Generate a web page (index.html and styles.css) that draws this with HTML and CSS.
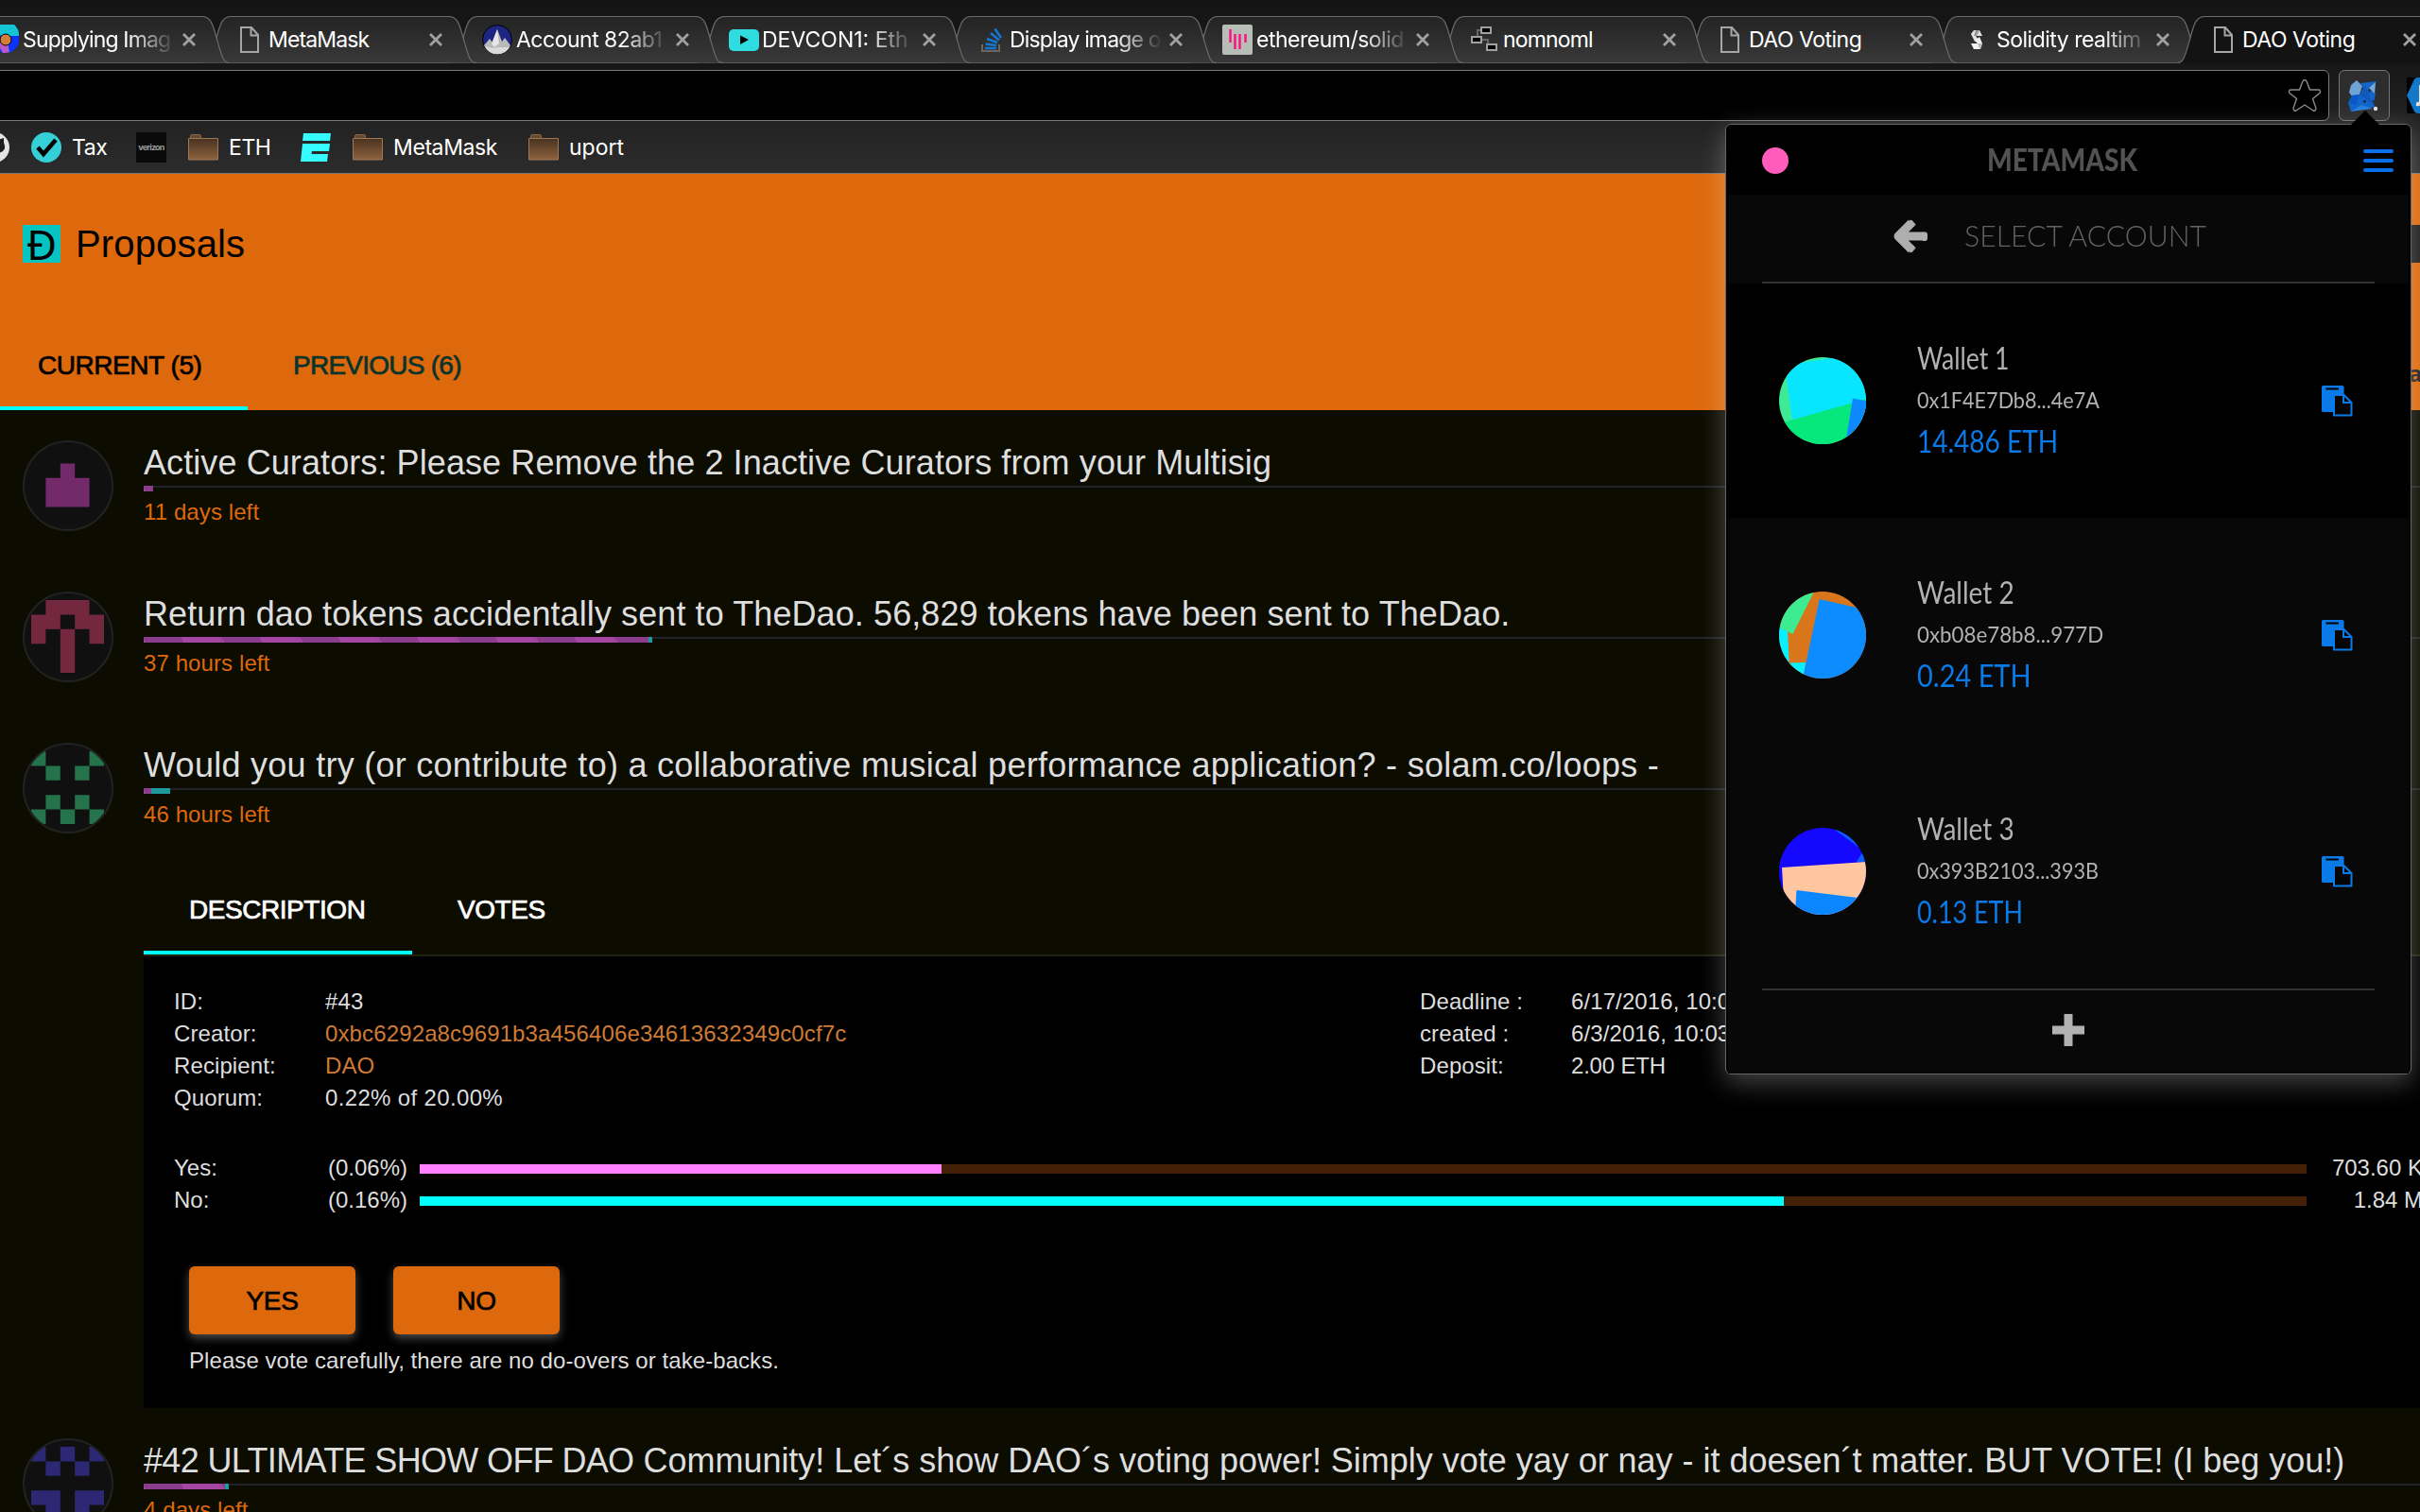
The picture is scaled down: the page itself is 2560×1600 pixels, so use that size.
FILE: index.html
```html
<!DOCTYPE html>
<html lang="en">
<head>
<meta charset="utf-8">
<title>DAO Voting</title>
<link rel="stylesheet" href="styles.css">
</head>
<body>
<svg class="defs" width="0" height="0" aria-hidden="true">
  <defs>
    <linearGradient id="tabFill" x1="0" y1="0" x2="0" y2="1"><stop offset="0" stop-color="#232323"/><stop offset="1" stop-color="#393939"/></linearGradient>
    <linearGradient id="folderFill" x1="0" y1="0" x2="0" y2="1"><stop offset="0" stop-color="#4a321f"/><stop offset="1" stop-color="#8c623f"/></linearGradient>
    <symbol id="tabShape" viewBox="-16 0 293 50"><path d="M-14 49.5C-7 49.5 -6 44 0 23C4 8 6 .5 16 .5H245C255 .5 257 8 261 23C267 44 268 49.5 275 49.5" fill="url(#tabFill)" stroke="#6b6b6b" stroke-width="1.2"/></symbol>
    <symbol id="doc" viewBox="0 0 20 28"><path d="M1 1H12L19 9V27H1ZM11.500 1V9.500H19" fill="none" stroke="#a6a6a6" stroke-width="2"/></symbol>
    <symbol id="close" viewBox="0 0 16 16"><path d="M2 2L14 14M14 2L2 14" stroke="#a2a2a2" stroke-width="2.800"/></symbol>
    <symbol id="folder" viewBox="0 0 32 28"><path d="M2.500 5V2Q2.500 .5 4 .5H12Q13.500 .5 13.500 2V5" fill="#65482e" stroke="#8a6848"/><path d="M.5 4.500H31.500V27H.5Z" fill="url(#folderFill)" stroke="#9c7858"/></symbol>
    <symbol id="copy" viewBox="0 0 33 33"><path d="M1.500 0H22Q23.500 0 23.500 1.500V10H15Q12 10 12 13V28H1.500Q0 28 0 26.500V1.500Q0 0 1.500 0Z" fill="#0a7ae8"/><path d="M4.500 2.500H18V4.500H4.500Z" fill="#000"/><path d="M13 11V31.500H31.500V18L23.500 10H13" fill="#050505" stroke="#0a7ae8" stroke-width="2" stroke-linejoin="round"/><path d="M23 10V18H31.500" fill="none" stroke="#0a7ae8" stroke-width="2"/></symbol>
  </defs>
</svg>

<header class="chrome">
  <div class="tabstrip">
    <div class="tab"><svg class="tab-bg"><use href="#tabShape"/></svg>
      <svg class="fav" viewBox="0 0 32 32"><circle cx="18" cy="16" r="14" fill="#0a33ff"/><path d="M4 10A14 14 0 0 1 32 12H16Z" fill="#15c5d6"/><path d="M4 12L15 30A14 14 0 0 0 22 29L20 18Z" fill="#b55ac8"/><circle cx="18" cy="16" r="6" fill="#d08038" stroke="#000"/></svg>
      <span class="label fade tight">Supplying Imag</span><svg class="x"><use href="#close"/></svg></div>
    <div class="tab"><svg class="tab-bg"><use href="#tabShape"/></svg>
      <svg class="fav doc"><use href="#doc"/></svg><span class="label tight">MetaMask</span><svg class="x"><use href="#close"/></svg></div>
    <div class="tab"><svg class="tab-bg"><use href="#tabShape"/></svg>
      <svg class="fav" viewBox="0 0 32 32"><circle cx="16" cy="16" r="15.500" fill="#1c2580" stroke="#000"/><path d="M2 22L8 15L11 19L16 5L21 18L24 14L30 22A15 15 0 0 1 2 22Z" fill="#b9b9b9"/><path d="M16 5L18 20L13 24L10 20Z" fill="#e6e6e6"/><path d="M3 23L12 25L18 24L29 24A15 15 0 0 1 3 23Z" fill="#d9dcd9"/></svg>
      <span class="label fade">Account 82ab1</span><svg class="x"><use href="#close"/></svg></div>
    <div class="tab"><svg class="tab-bg"><use href="#tabShape"/></svg>
      <svg class="fav" viewBox="0 0 32 32"><rect x="0" y="5" width="32" height="23" rx="5" fill="#2fdce0"/><path d="M12 11.500L21 16L12 21Z" fill="#000"/></svg>
      <span class="label fade wide">DEVCON1: Eth</span><svg class="x"><use href="#close"/></svg></div>
    <div class="tab"><svg class="tab-bg"><use href="#tabShape"/></svg>
      <svg class="fav" viewBox="0 0 32 32"><path d="M7 21V28H25V21" fill="none" stroke="#6e655d" stroke-width="2"/><path d="M10 25H22M10.500 20.500L22 22M12 15L23 19M16 9L25 16.500M20.500 4.500L27 14" stroke="#1577d2" stroke-width="2.600"/></svg>
      <span class="label fade tight">Display image o</span><svg class="x"><use href="#close"/></svg></div>
    <div class="tab"><svg class="tab-bg"><use href="#tabShape"/></svg>
      <svg class="fav" viewBox="0 0 32 32"><rect width="32" height="32" rx="2" fill="#b7beb5"/><path d="M8.500 5V19M13.500 10V26M18.500 10V26M24.500 10V19" stroke="#ff0f82" stroke-width="2.400"/></svg>
      <span class="label fade">ethereum/solid</span><svg class="x"><use href="#close"/></svg></div>
    <div class="tab"><svg class="tab-bg"><use href="#tabShape"/></svg>
      <svg class="fav" viewBox="0 0 32 32"><path d="M14 6H9V13M12 16H20V22" fill="none" stroke="#666" stroke-width="2"/><path d="M13 3H23V9H13ZM3 13H13V19H3ZM19 21H29V27H19Z" fill="#000" stroke="#a0a0a0" stroke-width="2"/></svg>
      <span class="label tight">nomnoml</span><svg class="x"><use href="#close"/></svg></div>
    <div class="tab"><svg class="tab-bg"><use href="#tabShape"/></svg>
      <svg class="fav doc"><use href="#doc"/></svg><span class="label">DAO Voting</span><svg class="x"><use href="#close"/></svg></div>
    <div class="tab"><svg class="tab-bg"><use href="#tabShape"/></svg>
      <svg class="fav" viewBox="0 0 32 32"><path d="M9 10L12 6H18L21 12H14L17 16L13 18Z" fill="#e2e2e2"/><path d="M14 6L18 6L15 12H12Z" fill="#999"/><path d="M21 20L19 26H12L9 20H16L13 17L18 13Z" fill="#f2f2f2"/><path d="M16 20H21L18 26Z" fill="#bbb"/></svg>
      <span class="label fade">Solidity realtim</span><svg class="x"><use href="#close"/></svg></div>
    <div class="tab active"><svg class="tab-bg" viewBox="-16 0 293 50"><path d="M-14 50C-7 50 -6 44 0 23C4 8 6 .5 16 .5H300V50Z" fill="#131313"/><path d="M-14 49.500C-7 49.500 -6 44 0 23C4 8 6 .5 16 .5H300" fill="none" stroke="#6b6b6b" stroke-width="1.2"/></svg>
      <svg class="fav doc"><use href="#doc"/></svg><span class="label">DAO Voting</span><svg class="x"><use href="#close"/></svg></div>
  </div>
  <div class="toolbar">
    <div class="omnibox"><svg width="36" height="36" viewBox="0 0 36 36"><path d="M18 1.500Q19.500 1.500 20.500 4L23.500 12H33Q35.500 13 34 15.500L26.500 21.500L30 31.500Q29.500 35 27 34L18 28L9 34Q6.500 35 6 31.500L9.500 21.500L2 15.500Q.5 13 3 12H12.500L15.500 4Q16.500 1.500 18 1.500Z" fill="none" stroke="#8a8a8a" stroke-width="1.400"/></svg></div>
    <div class="ext"><svg width="34" height="36" viewBox="0 0 34 36"><path d="M3 15L5 7L11 2L17 8L14 17L7 20Z" fill="#6fa3d6"/><path d="M15 5L32 3L23 12L27 20L30 30L20 32L5 35L2 26L6 18L14 17L18 10Z" fill="#1265c9"/><path d="M6 18L14 17L10 28L2 26Z" fill="#0c57c4"/><path d="M32 3L24 10L31 16L29 26L23 18Z" fill="#1265c9"/><path d="M31 4L30 16L24 10Z" fill="#79a9d8"/><path d="M20 8L29 29L14 17Z" fill="#0f5abc"/><path d="M17 24L21 23L20 26ZM27 24L29 23L29 26Z" fill="#123"/><circle cx="31" cy="32" r="2.200" fill="#ddd"/><path d="M5 35L16 28L28 32Z" fill="#2b7fdc"/></svg></div>
    <svg class="hex" width="38" height="38" viewBox="0 0 38 38"><path d="M0 0H38V38H0Z" fill="#000"/><path d="M0 19L8 2Q9 0 12 0H38V38H12Q9 38 8 36Z" fill="#1478c8"/><path d="M15 8V24Q15 29 10 28" fill="none" stroke="#e8e0d8" stroke-width="4"/></svg>
  </div>
  <div class="bookmarks">
    <svg class="gh" width="32" height="32" viewBox="0 0 32 32"><circle cx="16" cy="16" r="16" fill="#e4e4e4"/><path d="M10 28V22Q2 20 6 11L6 6L12 8H20L26 6V11Q30 20 20 22V30Z" fill="#1d1d1d"/></svg>
    <svg class="tax" width="32" height="32" viewBox="0 0 32 32"><circle cx="16" cy="16" r="16" fill="#35cfd8"/><path d="M7 16L13 23L26 8" fill="none" stroke="#000" stroke-width="4.500"/></svg><span class="t1">Tax</span>
    <div class="vz"><span>verizon</span></div>
    <svg class="folder"><use href="#folder"/></svg><span class="t2">ETH</span>
    <svg class="ee" width="32" height="30" viewBox="0 0 32 30"><path d="M3 0H32L31 8H2ZM2 11H31L30 19H12L11.500 22H29L28 30H0Z" fill="#35fbff"/></svg>
    <svg class="folder"><use href="#folder"/></svg><span class="t3">MetaMask</span>
    <svg class="folder"><use href="#folder"/></svg><span class="t4">uport</span>
  </div>
</header>

<div class="page">
  <header class="head">
    <div class="brand"><div class="logo">Đ</div><h1>Proposals</h1><div class="menu-btn"></div></div>
    <nav class="nav"><a class="on">CURRENT (5)</a><a class="prev">PREVIOUS (6)</a><span class="acct">a</span></nav>
  </header>

  <ul class="list">
    <li class="item">
      <div class="avatar"><svg viewBox="0 0 5 5"><path fill="#732a6b" d="M2 1h1v1h1v2h-3v-2h1z"/></svg></div>
      <div class="body"><h2>Active Curators: Please Remove the 2 Inactive Curators from your Multisig</h2>
        <div class="track"><i class="yes" style="width:10px"></i></div><p class="left">11 days left</p></div>
    </li>
    <li class="item">
      <div class="avatar"><svg viewBox="0 0 5 5"><path fill="#732840" d="M1 0h3v1h1v2h-1v-1h-1v-1h-1v1h-1v1h-1v-2h1zM2 2h1v3h-1z"/></svg></div>
      <div class="body"><h2>Return dao tokens accidentally sent to TheDao. 56,829 tokens have been sent to TheDao.</h2>
        <div class="track"><i class="yes" style="width:534px"></i><i class="no" style="width:4px"></i></div><p class="left">37 hours left</p></div>
    </li>
    <li class="item open">
      <div class="avatar"><svg viewBox="0 0 5 5"><path fill="#24734a" d="M0 0h1v1h-1zM4 0h1v1h-1zM1 1h1v1h-1zM3 1h1v1h-1zM1 3h1v1h-1zM3 3h1v1h-1zM0 4h1v1h-1zM2 4h1v1h-1zM4 4h1v1h-1z"/></svg></div>
      <div class="body"><h2 class="loose">Would you try (or contribute to) a collaborative musical performance application? - solam.co/loops -</h2>
        <div class="track"><i class="yes" style="width:8px"></i><i class="no" style="width:20px"></i></div><p class="left">46 hours left</p>
        <nav class="subnav"><a class="on">DESCRIPTION</a><a>VOTES</a></nav>
        <section class="panel">
          <div class="facts">
            <dl><dt>ID:</dt><dd>#43</dd><dt>Creator:</dt><dd class="link">0xbc6292a8c9691b3a456406e34613632349c0cf7c</dd><dt>Recipient:</dt><dd class="link">DAO</dd><dt>Quorum:</dt><dd class="quorum">0.22% of 20.00%</dd></dl>
            <dl><dt>Deadline :</dt><dd>6/17/2016, 10:03</dd><dt>created :</dt><dd>6/3/2016, 10:03</dd><dt>Deposit:</dt><dd class="deposit">2.00 ETH</dd></dl>
          </div>
          <div class="votes">
            <div class="vote"><span>Yes:</span><span class="pct">(0.06%)</span><div class="bar"><i class="pink" style="width:552px"></i></div><span class="amt">703.60 K</span></div>
            <div class="vote"><span>No:</span><span class="pct">(0.16%)</span><div class="bar"><i class="cyan" style="width:1443px"></i></div><span class="amt">1.84 M</span></div>
          </div>
          <div class="buttons"><button>YES</button><button>NO</button></div>
          <p class="note">Please vote carefully, there are no do-overs or take-backs.</p>
        </section>
      </div>
    </li>
    <li class="item">
      <div class="avatar"><svg viewBox="0 0 5 5"><path fill="#2c2873" d="M0 0h1v1h-1zM2 0h1v1h-1zM4 0h1v1h-1zM1 1h1v1h-1zM3 1h1v1h-1zM0 3h2v2h-1v-1h-1zM3 3h2v1h-1v1h-1z"/></svg></div>
      <div class="body"><h2 class="tighter"><span class="caps">#42 ULTIMATE SHOW OFF DAO</span> Community! Let´s show DAO´s voting power! Simply vote yay or nay - it doesen´t matter. BUT VOTE! (I beg you!)</h2>
        <div class="track"><i class="yes" style="width:86px"></i><i class="no" style="width:4px"></i></div><p class="left">4 days left</p></div>
    </li>
  </ul>
</div>

<aside class="popup">
  <svg class="arrow" width="32" height="16" viewBox="0 0 32 16"><path d="M0 16L16 0L32 16Z" fill="#000"/></svg>
  <div class="bar-top"><i class="net"></i><span class="name"><b>METAMASK</b></span><div class="burger"><i></i><i></i><i></i></div></div>
  <div class="select"><svg width="36" height="38" viewBox="0 0 36 38"><path d="M19 5L5 19L19 33M6 19H32" fill="none" stroke="#aeaeae" stroke-width="9" stroke-linejoin="round" stroke-linecap="butt"/><path d="M16 3.500L19 2L23 6.500L21 9ZM16 34.500L19 36L23 31.500L21 29ZM31 15H34Q35.500 15 35.500 17V21Q35.500 23.500 34 23.500H31Z" fill="#aeaeae" stroke="#aeaeae" stroke-width="1"/></svg><span class="sel"><b>SELECT ACCOUNT</b></span></div>
  <div class="wallets">
    <div class="wallet first"><svg class="jazz" viewBox="0 0 92 92"><path fill="#3deb97" d="M0 0H92V92H0Z"/><path fill="#08e6ff" d="M6 8.500L54 1L100 -6V60L14 67Z"/><path fill="#06e87c" d="M8 68L77 48.500L100 42V92H0V70Z"/><path fill="#0d88ff" d="M78 43.500L100 48V92H70Z"/></svg>
      <div class="info"><span class="wn"><b>Wallet 1</b></span><span class="wa"><b>0x1F4E7Db8...4e7A</b></span><span class="we"><b>14.486 ETH</b></span></div><svg class="copy"><use href="#copy"/></svg></div>
    <div class="wallet second"><svg class="jazz" viewBox="0 0 92 92"><path fill="#d9761c" d="M0 0H92V92H0Z"/><path fill="#3deb90" d="M37 0H0V38L14.500 45Z"/><path fill="#06f0ff" d="M0 38L9 42L10.700 75.500L28 75L26 92H0Z"/><path fill="#0d8cff" d="M42.700 8L100 21V92H25Z"/></svg>
      <div class="info"><span class="wn"><b>Wallet 2</b></span><span class="wa"><b>0xb08e78b8...977D</b></span><span class="we"><b>0.24 ETH</b></span></div><svg class="copy"><use href="#copy"/></svg></div>
    <div class="wallet third"><svg class="jazz" viewBox="0 0 92 92"><path fill="#1408ff" d="M0 0H92V92H0Z"/><path fill="#0d5cff" d="M56 0L85 21L88 26L82 36L92 37V0Z"/><path fill="#ffc69f" d="M3 42L92 36V92H5L4.400 66Z"/><path fill="#0a86ff" d="M18.400 66L83 74L92 76V92H17Z"/></svg>
      <div class="info"><span class="wn"><b>Wallet 3</b></span><span class="wa"><b>0x393B2103...393B</b></span><span class="we"><b>0.13 ETH</b></span></div><svg class="copy"><use href="#copy"/></svg></div>
  </div>
  <div class="add"><svg width="34" height="34" viewBox="0 0 34 34"><path d="M17 4.500V29.500M4.500 17H29.500" stroke="#b2b2b2" stroke-width="9" stroke-linecap="square"/></svg></div>
</aside>
</body>
</html>
```
FILE: styles.css
```css
* { box-sizing: border-box; }
body { margin: 0; width: 2560px; height: 1600px; overflow: hidden; position: relative; background: #0c0c00; color: #dedede; font-family: "Liberation Sans", Arial, sans-serif; font-size: 24px; }
b { font-weight: inherit; }
svg { display: block; flex: none; }
.defs { position: absolute; }
h1, h2, p, ul, dl, dd { margin: 0; padding: 0; font-weight: 400; }

.chrome { height: 184px; background: linear-gradient(#141414, #191919 66px, #171717 67px, #222 128px, #2c2c2c 183px); border-bottom: 1px solid #777; font-family: Inter, sans-serif; color: #fff; overflow: hidden; }
.tabstrip { height: 67px; padding-top: 17px; margin-left: -32px; width: 2700px; display: flex; background: linear-gradient(#777, #777) 0 66px / 100% 1px no-repeat; }
.tab { position: relative; flex: none; width: 261px; height: 50px; padding: 0 21px 0 20px; display: flex; align-items: center; }
.tab:nth-child(1) { z-index: 9; }
.tab:nth-child(2) { z-index: 8; }
.tab:nth-child(3) { z-index: 7; }
.tab:nth-child(4) { z-index: 6; }
.tab:nth-child(5) { z-index: 5; }
.tab:nth-child(6) { z-index: 4; }
.tab:nth-child(7) { z-index: 3; }
.tab:nth-child(8) { z-index: 2; }
.tab:nth-child(9) { z-index: 1; }
.tab.active { z-index: 10; }
.tab-bg { position: absolute; left: -16px; top: 0; width: 293px; height: 50px; z-index: -1; }
.fav { width: 32px; height: 32px; }
.fav.doc { width: 20px; height: 28px; margin: 0 6px 0 5px; }
.fav.doc + .label { width: 161px; }
.label { width: 160px; margin-left: 4px; height: 50px; line-height: 51px; font-size: 23px; letter-spacing: -.5px; white-space: nowrap; overflow: hidden; }
.label.tight { letter-spacing: -.85px; }
.label.wide { letter-spacing: 0; margin-left: 3px; width: 161px; }
.fade { -webkit-mask-image: linear-gradient(90deg, #000 112px, transparent 162px); mask-image: linear-gradient(90deg, #000 112px, transparent 162px); }
.x { width: 16px; height: 16px; margin-left: 8px; }

.toolbar { height: 61px; padding-top: 7px; display: flex; align-items: flex-start; }
.omnibox { flex: none; width: 2474px; margin-left: -10px; height: 54px; background: #000; border: 1.500px solid #777; border-radius: 6px; display: flex; justify-content: flex-end; padding: 8px 7px 0 0; }
.ext { flex: none; width: 54px; height: 54px; margin-left: 10px; border: 1px solid #757575; border-radius: 6px; background: #2d2d2d; display: flex; justify-content: center; padding: 8px 4px 0 0; }
.hex { margin: 8px 0 0 18px; }
.bookmarks { height: 55px; display: flex; align-items: center; font-size: 23px; letter-spacing: -.4px; }
.gh { margin-left: -22px; }
.tax { margin-left: 23px; }
.bookmarks span { line-height: 40px; white-space: nowrap; }
.t1 { margin-left: 11px; width: 68px; }
.bookmarks .vz { width: 32px; height: 32px; background: #0a0a0a; display: flex; justify-content: center; align-items: center; overflow: hidden; margin-right: 23px; }
.bookmarks .vz span { font-size: 9px; font-weight: 700; color: #999; letter-spacing: -.8px; }
.folder { width: 32px; height: 28px; }
.t2 { margin-left: 11px; width: 76px; }
.ee { margin-right: 23px; }
.t3 { margin-left: 11px; width: 143px; }
.t4 { margin-left: 11px; letter-spacing: 0; }

.page { height: 1416px; overflow: hidden; }
.head { height: 250px; background: #dd690c; padding-top: 54px; display: flex; flex-direction: column; justify-content: space-between; color: #000; overflow: hidden; }
.brand { display: flex; height: 40px; padding-left: 24px; }
.logo { width: 40px; height: 40px; background: #06c4c2; text-align: center; font-family: "Noto Sans", sans-serif; font-size: 44px; line-height: 40px; }
h1 { margin-left: 16px; font-size: 40px; line-height: 41px; letter-spacing: .15px; }
.menu-btn { margin-left: auto; width: 16px; height: 40px; background: #1f1f1f; border-radius: 5px 0 0 5px; }
.nav, .subnav { display: flex; height: 96px; font-size: 28px; line-height: 97px; -webkit-text-stroke: .7px; letter-spacing: -.45px; }
.nav a { padding-left: 48px; color: #0a332c; }
.nav a.on { width: 262px; padding-left: 40px; color: #000; border-bottom: 4px solid #0ff; }
.nav a.prev { letter-spacing: -.75px; }
.acct { margin-left: auto; width: 12px; font: 700 24px/114px "Noto Sans", sans-serif; color: #222; -webkit-text-stroke: 0; }

.list { list-style: none; }
.item { display: flex; height: 160px; padding: 32px 0 0 24px; }
.item.open { height: 736px; }
.avatar { flex: none; width: 96px; height: 96px; border-radius: 50%; overflow: hidden; background: #101010; border: 2px solid #222; padding: 7px; margin-right: 32px; }
.avatar svg { width: 77px; height: 77px; }
.body { width: 2636px; flex: none; }
h2 { height: 48px; font-size: 36px; line-height: 48px; white-space: nowrap; letter-spacing: .09px; }
h2.loose { letter-spacing: .27px; }
h2.tighter { letter-spacing: -.02px; }
.caps { letter-spacing: -.65px; }
.track { height: 6px; display: flex; background: linear-gradient(#222226, #222226) 0 0 / 100% 2px no-repeat; }
.track .yes { background: repeating-linear-gradient(60deg, #a446a2 0 2px, #8c3c8c 2px 37px, #a446a2 37px 71.500px, #8c3c8c 71.500px 72px); }
.track .no { background: #1f9a9c; }
.left { height: 44px; line-height: 44px; color: #dd690c; letter-spacing: .1px; }

.subnav { margin-top: 30px; height: 98px; border-bottom: 2px solid #222210; color: #fff; }
.subnav a { height: 96px; padding: 0 48px; }
.subnav a.on { width: 284px; border-bottom: 4px solid #0ff; }
.panel { height: 478px; padding: 31px 0 0 32px; background: #000; }
.facts { display: flex; }
dl { flex: none; width: 1318px; display: grid; grid-template-columns: 160px 1fr; grid-auto-rows: 34px; line-height: 34px; align-content: start; letter-spacing: .1px; }
.link { color: #cf7b34; letter-spacing: .13px; }
.quorum { letter-spacing: .35px; }
.deposit { letter-spacing: -.2px; }
.votes { margin-top: 40px; }
.vote { display: grid; grid-template-columns: 163px 97px 1996px 123px; height: 34px; line-height: 34px; }
.bar { height: 10px; margin-top: 13px; background: #442006; }
.bar i { display: block; height: 10px; }
.pink { background: #ff80ff; }
.cyan { background: #0ff; }
.amt { text-align: right; }
.buttons { margin: 53px 0 0 16px; display: flex; gap: 40px; }
button { width: 176px; height: 72px; border: 0; border-radius: 6px; background: #dd690c; color: #000; font: 28px/73px "Liberation Sans", Arial, sans-serif; -webkit-text-stroke: .7px; padding: 0; box-shadow: 0 4px 10px rgba(255, 255, 255, .3); letter-spacing: -.3px; }
.note { margin: 11px 0 0 16px; line-height: 34px; letter-spacing: .07px; }

.popup { position: absolute; left: 1825px; top: 131px; width: 726px; height: 1006px; background: #000; border: 1px solid #666; border-radius: 6px; box-shadow: 0 8px 28px rgba(255, 255, 255, .28); padding: 0 2px 1px; font-family: Lato, sans-serif; z-index: 20; }
.arrow { position: absolute; left: 660px; top: -15px; }
.popup b { display: inline-block; transform-origin: 0 50%; }
.bar-top { height: 74px; display: flex; align-items: center; padding: 2px 16px 0 36px; }
.net { width: 28px; height: 28px; border-radius: 50%; background: #ff5cbb; }
.name { margin: -4px auto 0 210px; font-size: 32px; font-weight: 900; color: #525252; }
.name b { transform: scaleX(.878); }
.burger { width: 32px; display: grid; gap: 6px; }
.burger i { height: 4px; border-radius: 2px; background: #0a70ea; }
.select { height: 94px; background: #080808; display: flex; align-items: center; padding: 0 0 6px 175px; position: relative; }
.select::after { content: ""; position: absolute; left: 36px; width: 648px; bottom: 0; height: 2px; background: #333; }
.sel { font-size: 32px; font-weight: 300; margin: -3px 0 0 39px; color: #626262; }
.sel b { transform: scaleX(.945); }
.wallets { height: 746px; }
.wallet { height: 248px; display: flex; align-items: center; padding: 0 59px 0 54px; background: #080808; }
.wallet.first { background: #000; }
.wallet.third { padding-top: 2px; height: 250px; }
.jazz { width: 92px; height: 92px; border-radius: 50%; }
.info { flex: 1; margin: -3px 0 0 54px; display: flex; flex-direction: column; line-height: 44px; color: #b2b2b2; white-space: nowrap; }
.wn { font-size: 32px; }
.wn b { transform: scaleX(.875); }
.first .wn b { transform: scaleX(.83); }
.wa { font-size: 23px; }
.wa b { transform: scaleX(.94); }
.second .wa b { transform: scaleX(.97); }
.we { font-size: 32px; color: #0a7ae8; }
.we b { transform: scaleX(.875); }
.second .we b { transform: scaleX(.905); }
.third .we b { transform: scaleX(.84); }
.copy { width: 33px; height: 33px; }
.add { height: 90px; background: #080808; position: relative; display: flex; justify-content: center; padding-top: 27px; }
.add::before { content: ""; position: absolute; left: 36px; width: 648px; top: 0; height: 2px; background: #333; }
```
